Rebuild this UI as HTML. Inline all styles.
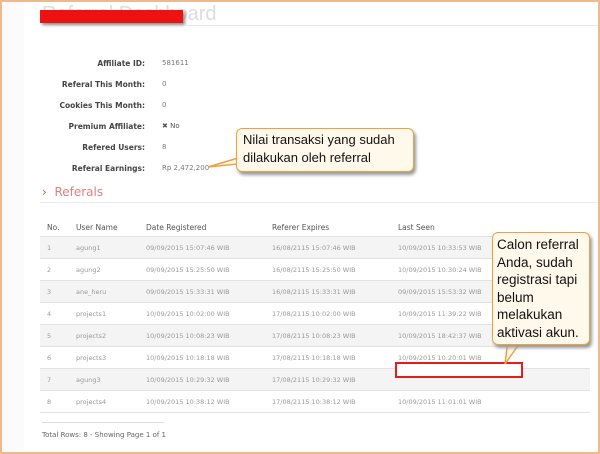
<html><head><style>
body{margin:0;width:600px;height:454px;overflow:hidden;background:#fff;font-family:"DejaVu Sans","Liberation Sans",sans-serif;}
.frame{position:absolute;left:0;top:0;width:596px;height:450px;border:2px solid #f0b98c;}
.t{position:absolute;font-size:7px;color:#777;white-space:nowrap}
.lbl{position:absolute;right:455px;font-size:7.5px;color:#444;font-weight:bold;white-space:nowrap}
.val{position:absolute;left:162px;font-size:7px;color:#777}
.row{position:absolute;left:40px;width:550px;height:22px;border-top:1px solid #e2e2e2}
.g{background:#f4f4f4}
.c{position:absolute;top:7px;font-size:6.5px;color:#999;white-space:nowrap}
.bub{position:absolute;background:#fff9ec;border:1.5px solid #f0a040;border-radius:6px;font-family:"Liberation Sans",sans-serif;color:#111;box-shadow:2px 3px 3px #999;}
</style></head><body>
<div class="frame"></div>
<div style="position:absolute;left:2px;top:2px;width:22px;height:450px;background:#fbfbfb"></div>
<div style="position:absolute;left:42px;top:3px;font-size:20px;color:#ddd;font-family:'Liberation Sans'">Referral Dashboard</div>
<div style="position:absolute;left:40px;top:10px;width:143px;height:13px;background:#e11;box-shadow:2px 2px 3px #888"></div>
<div style="position:absolute;left:184px;top:25px;width:414px;height:1px;background:#e8e8e8"></div>
<div class="lbl" style="top:59px">Affiliate ID:</div><div class="val" style="top:59px">581611</div>
<div class="lbl" style="top:80px">Referal This Month:</div><div class="val" style="top:80px">0</div>
<div class="lbl" style="top:101px">Cookies This Month:</div><div class="val" style="top:101px">0</div>
<div class="lbl" style="top:122px">Premium Affiliate:</div><div class="val" style="top:122px;color:#555">✖ No</div>
<div class="lbl" style="top:143px">Refered Users:</div><div class="val" style="top:143px">8</div>
<div class="lbl" style="top:164px">Referal Earnings:</div><div class="val" style="top:164px">Rp 2,472,200</div>
<svg style="position:absolute;left:206px;top:150px" width="40" height="20"><path d="M2 17 L32 8 L32 14 Z" fill="#fff9ec" stroke="#f0a040" stroke-width="1.5"/></svg>
<div class="bub" style="left:236px;top:128px;width:170px;height:40px;font-size:13px;line-height:18px;padding:2px 0 0 6px">Nilai transaksi yang sudah<br>dilakukan oleh referral</div>
<div style="position:absolute;left:42px;top:185px;font-size:12px;color:#d9534f">›&nbsp;&nbsp;<span style="color:#e08080">Referals</span></div>
<div style="position:absolute;left:40px;top:202px;width:558px;height:1px;background:#ececec"></div>
<div class="t" style="left:47px;top:223px;font-size:7.5px;color:#555">No.</div>
<div class="t" style="left:76px;top:223px;font-size:7.5px;color:#555">User Name</div>
<div class="t" style="left:146px;top:223px;font-size:7.5px;color:#555">Date Registered</div>
<div class="t" style="left:272px;top:223px;font-size:7.5px;color:#555">Referer Expires</div>
<div class="t" style="left:398px;top:223px;font-size:7.5px;color:#555">Last Seen</div>
<div class="row g" style="top:236px"><span class="c" style="left:7px">1</span><span class="c" style="left:36px">agung1</span><span class="c" style="left:106px">09/09/2015 15:07:46 WIB</span><span class="c" style="left:232px">16/08/2115 15:07:46 WIB</span><span class="c" style="left:358px">10/09/2015 10:33:53 WIB</span></div>
<div class="row" style="top:258px"><span class="c" style="left:7px">2</span><span class="c" style="left:36px">agung2</span><span class="c" style="left:106px">09/09/2015 15:25:50 WIB</span><span class="c" style="left:232px">16/08/2115 15:25:50 WIB</span><span class="c" style="left:358px">10/09/2015 10:30:24 WIB</span></div>
<div class="row g" style="top:280px"><span class="c" style="left:7px">3</span><span class="c" style="left:36px">ane_heru</span><span class="c" style="left:106px">09/09/2015 15:33:31 WIB</span><span class="c" style="left:232px">16/08/2115 15:33:31 WIB</span><span class="c" style="left:358px">09/09/2015 15:53:32 WIB</span></div>
<div class="row" style="top:302px"><span class="c" style="left:7px">4</span><span class="c" style="left:36px">projects1</span><span class="c" style="left:106px">10/09/2015 10:02:00 WIB</span><span class="c" style="left:232px">17/08/2115 10:02:00 WIB</span><span class="c" style="left:358px">10/09/2015 11:39:22 WIB</span></div>
<div class="row g" style="top:324px"><span class="c" style="left:7px">5</span><span class="c" style="left:36px">projects2</span><span class="c" style="left:106px">10/09/2015 10:08:23 WIB</span><span class="c" style="left:232px">17/08/2115 10:08:23 WIB</span><span class="c" style="left:358px">10/09/2015 18:42:37 WIB</span></div>
<div class="row" style="top:346px"><span class="c" style="left:7px">6</span><span class="c" style="left:36px">projects3</span><span class="c" style="left:106px">10/09/2015 10:18:18 WIB</span><span class="c" style="left:232px">17/08/2115 10:18:18 WIB</span><span class="c" style="left:358px">10/09/2015 10:20:01 WIB</span></div>
<div class="row g" style="top:368px"><span class="c" style="left:7px">7</span><span class="c" style="left:36px">agung3</span><span class="c" style="left:106px">10/09/2015 10:29:32 WIB</span><span class="c" style="left:232px">17/08/2115 10:29:32 WIB</span></div>
<div class="row" style="top:390px"><span class="c" style="left:7px">8</span><span class="c" style="left:36px">projects4</span><span class="c" style="left:106px">10/09/2015 10:38:12 WIB</span><span class="c" style="left:232px">17/08/2115 10:38:12 WIB</span><span class="c" style="left:358px">10/09/2015 11:01:01 WIB</span></div>
<div style="position:absolute;left:40px;top:412px;width:550px;height:1px;background:#e2e2e2"></div>
<div style="position:absolute;left:42px;top:422px;width:122px;height:1px;background:#ddd"></div>
<div class="t" style="left:42px;top:431px;color:#666">Total Rows: 8 - Showing Page 1 of 1</div>
<div style="position:absolute;left:395px;top:362px;width:124px;height:12px;border:2px solid #e21d1d;background:#fff"></div>
<svg style="position:absolute;left:500px;top:330px" width="30" height="36"><path d="M5 34 L8 10 L22 10 Z" fill="#fff9ec" stroke="#f0a040" stroke-width="1.5"/></svg>
<div class="bub" style="left:492px;top:232px;width:92px;height:108px;font-size:13.5px;line-height:17.5px;padding:3px 0 0 4px">Calon referral Anda, sudah registrasi tapi belum melakukan aktivasi akun.</div>
</body></html>
